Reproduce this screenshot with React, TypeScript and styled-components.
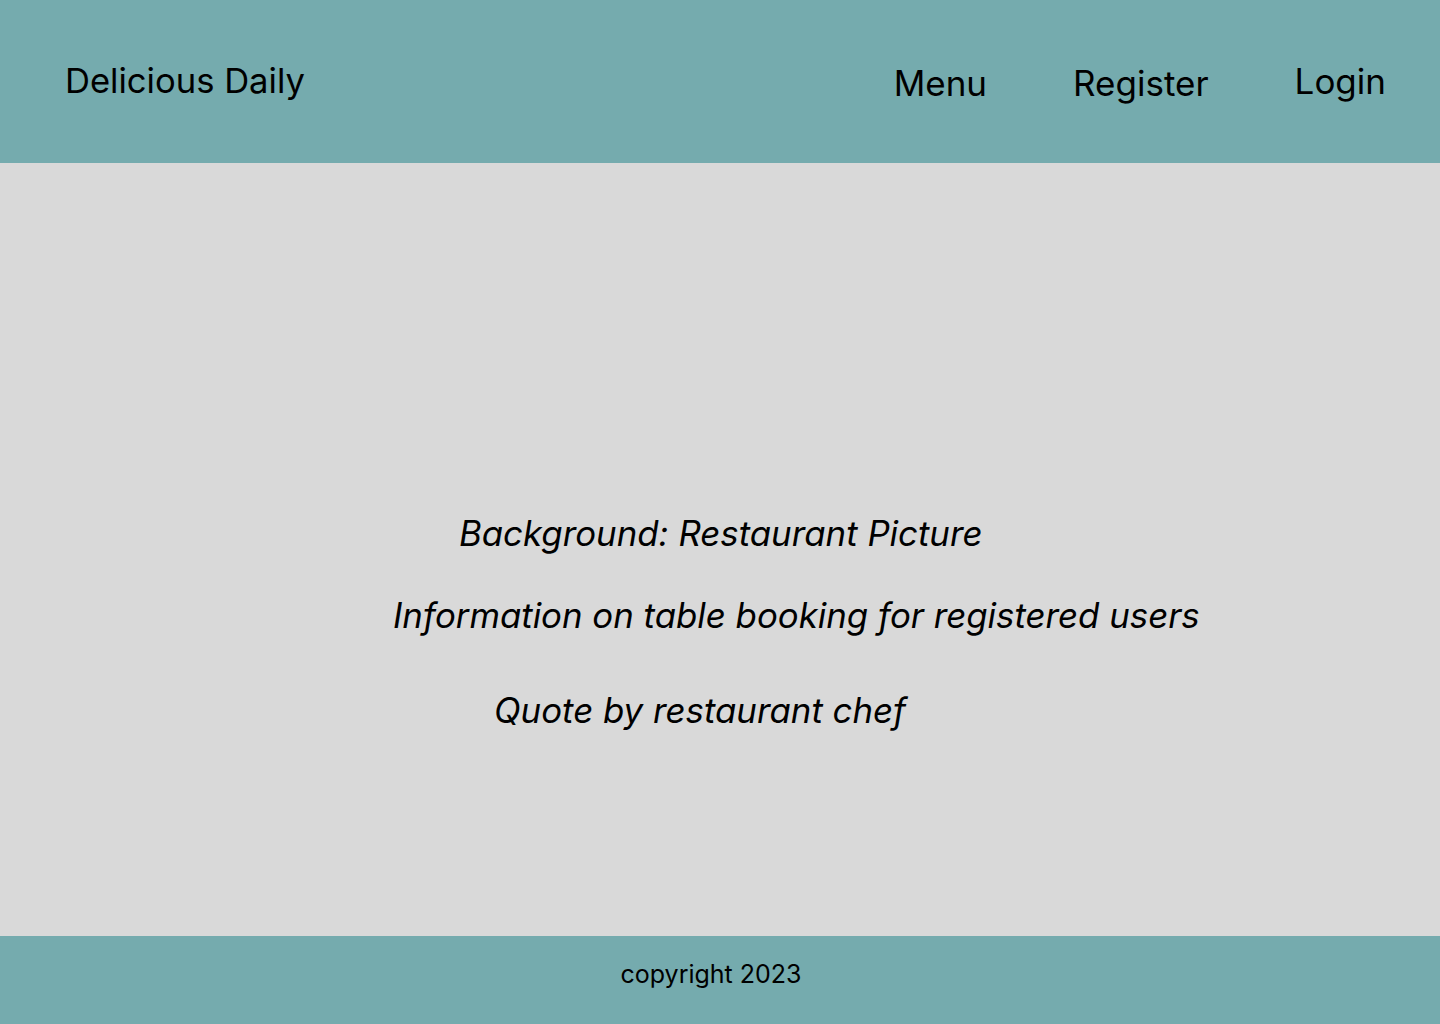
import React from "react";
import styled, { createGlobalStyle } from "styled-components";

const Global = createGlobalStyle`
  html, body { margin: 0; padding: 0; }
  body { font-family: Inter, "Noto Sans", sans-serif; color: #000; background: #d9d9d9; }
`;

const Page = styled.div`
  width: 1440px;
  height: 1024px;
  display: flex;
  flex-direction: column;
`;

const Header = styled.header`
  height: 163px;
  flex: none;
  background: #75abae;
  display: flex;
  align-items: flex-start;
  justify-content: space-between;
  padding: 0 54px 0 65px;
  box-sizing: border-box;
`;

const Logo = styled.div`
  font-size: 34.6px;
  line-height: 1;
  margin-top: 63px;
`;

const Nav = styled.nav`
  display: flex;
  align-items: flex-start;
  gap: 86px;
`;

const NavItem = styled.a<{ $top: number }>`
  font-size: 35px;
  line-height: 1;
  margin-top: ${(p) => p.$top}px;
  color: #000;
  text-decoration: none;
`;

const Main = styled.main`
  flex: 1;
  background: #d9d9d9;
  display: flex;
  flex-direction: column;
  align-items: flex-start;
  padding-top: 353px;
`;

const Line = styled.p<{ $indent: number; $gap: number }>`
  margin: ${(p) => p.$gap}px 0 0 ${(p) => p.$indent}px;
  font-size: 34.8px;
  font-style: italic;
  line-height: 1;
`;

const Footer = styled.footer`
  height: 88px;
  flex: none;
  background: #75abae;
  display: flex;
  justify-content: center;
  padding-right: 18px;
  box-sizing: border-box;
`;

const Copy = styled.div`
  font-size: 25px;
  line-height: 1;
  margin-top: 26px;
`;

export default function App() {
  return (
    <>
      <Global />
      <Page>
        <Header>
          <Logo>Delicious Daily</Logo>
          <Nav>
            <NavItem $top={66}>Menu</NavItem>
            <NavItem $top={66}>Register</NavItem>
            <NavItem $top={64}>Login</NavItem>
          </Nav>
        </Header>
        <Main>
          <Line $indent={459} $gap={0}>Background: Restaurant Picture</Line>
          <Line $indent={393} $gap={47}>Information on table booking for registered users</Line>
          <Line $indent={494} $gap={60}>Quote by restaurant chef</Line>
        </Main>
        <Footer>
          <Copy>copyright 2023</Copy>
        </Footer>
      </Page>
    </>
  );
}
